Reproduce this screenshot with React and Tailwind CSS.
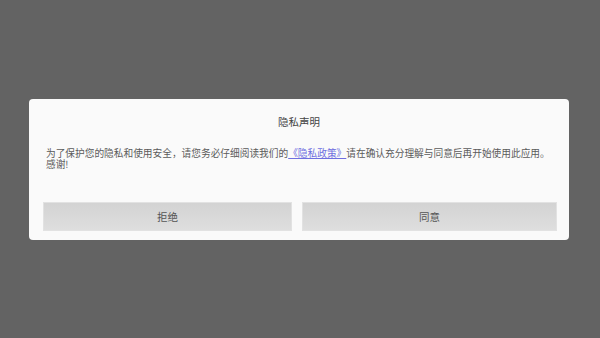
import React from 'react';

const cjk = { fontFamily: '"Noto Sans CJK SC", "Noto Sans", sans-serif' };

function DialogButton({ label, className }) {
    return (
        <button
            className={`h-[29px] border border-[#e2e2e2] bg-gradient-to-b from-[#d3d3d3] to-[#dedede] text-[10.5px] text-[#555555] ${className}`}
        >
            {label}
        </button>
    );
}

export default function App() {
    return (
        <div className="h-[338px] w-[600px] overflow-hidden bg-[#636363] pt-[99px] pl-[29px]" style={cjk}>
            <div className="h-[141px] w-[540px] rounded-[4px] bg-[#fafafa]">
                <div className="pt-[16px] text-center text-[10.5px] leading-[14px] text-[#444444]">隐私声明</div>
                <p className="mt-[19px] px-[17px] text-[9.7px] leading-[11px] text-[#5a5a5a]">
                    <span>为了保护您的隐私和使用安全，请您务必仔细阅读我们的</span>
                    <a className="text-[#6f6fe0] underline">《隐私政策》</a>
                    <span>请在确认充分理解与同意后再开始使用此应用。</span>
                    <span>感谢!</span>
                </p>
                <div className="mt-[32px] flex pl-[14px]">
                    <DialogButton label="拒绝" className="w-[249px]" />
                    <DialogButton label="同意" className="ml-[10px] w-[255px]" />
                </div>
            </div>
        </div>
    );
}
